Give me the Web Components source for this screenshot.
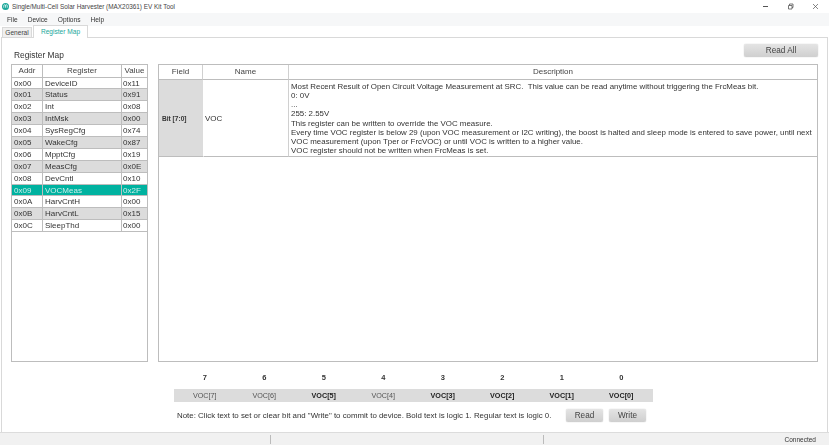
<!DOCTYPE html>
<html><head><meta charset="utf-8">
<style>
html,body{margin:0;padding:0;width:829px;height:445px;overflow:hidden;background:#fff;font-family:"Liberation Sans",sans-serif;color:#333}
</style></head><body>
<ek-app></ek-app>
<script>
function def(name,css,html,init){
  customElements.define(name,class extends HTMLElement{
    connectedCallback(){
      if(this.shadowRoot)return;
      const r=this.attachShadow({mode:'open'});
      r.innerHTML='<style>'+css+'</style>'+html;
      if(init)init(r,this);
    }
  });
}
def('ek-title',`:host{display:flex;align-items:center;height:13px;background:#fff;font-size:6.4px;color:#444}
.i{margin:0 3px 0 2px;width:7px;height:7px;flex:none}
.t{flex:1}
.w{display:flex}
.w svg{width:7px;height:7px;display:block;margin-right:18px}
.w svg:last-child{margin-right:10px}`,
`<svg class="i" viewBox="0 0 8 8"><circle cx="4" cy="4" r="4" fill="#1aa79a"/><path d="M2 5.4V3a1 1 0 0 1 2 0v2.4M4 3a1 1 0 0 1 2 0v2.4" fill="none" stroke="#fff" stroke-width=".8"/></svg>
<span class="t">Single/Multi-Cell Solar Harvester (MAX20361) EV Kit Tool</span>
<span class="w">
<svg viewBox="0 0 7 7"><path d="M1 3.5H6" stroke="#555" fill="none"/></svg>
<svg viewBox="0 0 7 7"><path d="M1.5 2.5H5V6H1.5ZM2.5 2.5V1H6V4.5H5" stroke="#555" stroke-width=".8" fill="none"/></svg>
<svg viewBox="0 0 7 7"><path d="M1 1L6 6M6 1L1 6" stroke="#555" stroke-width=".7" fill="none"/></svg>
</span>`);
def('ek-menu',`:host{display:flex;height:13px;align-items:center;background:#f6f7f8;font-size:6.6px;color:#333;padding-left:7px;gap:10px}`,
`<span>File</span><span>Device</span><span>Options</span><span>Help</span>`);
def('ek-tabs',`:host{display:flex;height:11px;align-items:flex-end;background:#fff;font-size:6.6px;padding-left:2px;position:relative;z-index:1}
span{display:block;box-sizing:border-box}
.g{width:30px;height:10px;text-align:center;background:#f0f0f0;border:1px solid #d9d9d9;border-bottom:none;color:#444;line-height:9px}
.r{width:55px;margin-left:1px;height:13px;line-height:12px;text-align:center;background:#fff;border:1px solid #d9d9d9;border-bottom:none;color:#22a79b;margin-bottom:-1px}`,
`<span class="g">General</span><span class="r">Register Map</span>`);
def('ek-button',`:host{display:inline-flex;align-items:center;justify-content:center;box-sizing:border-box;border-radius:2px;background:linear-gradient(#e4e4e4,#cfcfcf);box-shadow:0 0 1px #aaa;color:#444;font-size:8.2px}`,`<slot></slot>`);
def('ek-regs',`:host{display:block;box-sizing:border-box;border:1px solid #bdbdbd;width:137px;height:298px;background:#fff;font-size:8px;color:#333}
.g{display:grid;grid-template-columns:30px 79px 26px;grid-template-rows:12.5px;grid-auto-rows:11.9px}
.g>*{box-sizing:border-box;padding-left:2px;line-height:11px;border-bottom:1px solid #bdbdbd;white-space:nowrap;overflow:hidden}
.g>:nth-child(3n+2){border-left:1px solid #bdbdbd;padding-left:2px}
.g>:nth-child(3n){border-left:1px solid #bdbdbd;padding-left:1px}
.g>.h{text-align:center;padding-left:0;line-height:12px;color:#444}
.d{background:#dcdcdc}
.s{background:#00b2a0;color:#cdeeea}`,
``,(r)=>{
 const regs=[['0x00','DeviceID','0x11'],['0x01','Status','0x91'],['0x02','Int','0x08'],['0x03','IntMsk','0x00'],['0x04','SysRegCfg','0x74'],['0x05','WakeCfg','0x87'],['0x06','MpptCfg','0x19'],['0x07','MeasCfg','0x0E'],['0x08','DevCntl','0x10'],['0x09','VOCMeas','0x2F'],['0x0A','HarvCntH','0x00'],['0x0B','HarvCntL','0x15'],['0x0C','SleepThd','0x00']];
 let h='<div class="g"><div class="h">Addr</div><div class="h">Register</div><div class="h">Value</div>';
 regs.forEach((x,i)=>{const c=i===9?'s':(i%2?'d':'');x.forEach(v=>h+=`<div class="${c}">${v}</div>`)});
 r.innerHTML+=h+'</div>';
});
def('ek-desc',`:host{display:block;box-sizing:border-box;border:1px solid #bdbdbd;width:660px;height:298px;background:#fff;font-size:8px;color:#333}
.g{display:grid;grid-template-columns:44px 86px 1fr;grid-template-rows:15px 77px}
.g>*{box-sizing:border-box;border-bottom:1px solid #bdbdbd}
.h{text-align:center;line-height:14px;color:#444;border-right:1px solid #d0d0d0}
.h:nth-child(3){border-right:none}
.f{background:#dcdcdc;font-weight:bold;font-size:6.6px;display:flex;align-items:center;padding-left:3px;color:#333}
.n{display:flex;align-items:center;padding-left:1px;border-left:1px solid #fff;border-right:1px solid #d0d0d0}
.t{padding:2px 2px 0;line-height:9.15px;font-size:7.9px;white-space:nowrap}`,
`<div class="g"><div class="h">Field</div><div class="h">Name</div><div class="h">Description</div>
<div class="f">Bit [7:0]</div><div class="n">VOC</div>
<div class="t">Most Recent Result of Open Circuit Voltage Measurement at SRC.&nbsp; This value can be read anytime without triggering the FrcMeas bit.<br>0: 0V<br>...<br>255: 2.55V<br>This register can be written to override the VOC measure.<br>Every time VOC register is below 29 (upon VOC measurement or I2C writing), the boost is halted and sleep mode is entered to save power, until next<br>VOC measurement (upon Tper or FrcVOC) or until VOC is written to a higher value.<br>VOC register should not be written when FrcMeas is set.</div></div>`);
def('ek-bits',`:host{display:block;width:479px;font-size:7.2px;color:#333}
.g{display:grid;grid-template-columns:repeat(8,59.5px);padding:0 2px 0 1px;text-align:center}
.n{font-weight:bold;height:19px;line-height:16px;font-size:7.5px}
.s{background:#dcdcdc;margin:0 -2px 0 -1px;padding:0 2px 0 1px;grid-column:1/-1;display:grid;grid-template-columns:repeat(8,59.5px)}
.v{height:13px;line-height:14px;color:#555}
.v.b{font-weight:bold;color:#222}`,
`<div class="g">${[7,6,5,4,3,2,1,0].map(n=>`<div class="n">${n}</div>`).join('')}
<div class="s">${[0,0,1,0,1,1,1,1].map((b,i)=>`<div class="v ${b?'b':''}">VOC[${7-i}]</div>`).join('')}</div></div>`);
def('ek-status',`:host{display:grid;grid-template-columns:271px 273px 1fr;height:12px;background:#f1f1f1;font-size:6.5px;color:#333;border-top:1px solid #dcdcdc}
div{border-right:1px solid #bbb;margin:2px 0}
div:last-child{border:none;text-align:right;padding-right:13px;line-height:9px}`,
`<div></div><div></div><div>Connected</div>`);
def('ek-app',`:host{display:flex;flex-direction:column;width:829px;height:445px;font-family:"Liberation Sans",sans-serif;filter:blur(.3px)}
.pane{flex:1;box-sizing:border-box;border:1px solid #d9d9d9;border-bottom:none;margin:0 1px;padding:6px 9px 0 9px;display:flex;flex-direction:column;min-height:0}
.top{display:flex;justify-content:space-between;height:20px}
h1{font:normal 8.4px "Liberation Sans",sans-serif;margin:0 0 0 3px;padding-top:6px;color:#333}
.ra{width:74px;height:13px;margin-right:0}
.tables{display:flex;gap:10px}
.foot{margin-left:163px;margin-top:8px}
.note{display:flex;align-items:center;font-size:7.88px;color:#333;height:26px;padding-left:3px}
.note span{width:389px;white-space:nowrap}
.note ek-button{width:37px;height:13px;margin-right:6px}`,
`<ek-title></ek-title><ek-menu></ek-menu><ek-tabs></ek-tabs>
<div class="pane">
<div class="top"><h1>Register Map</h1><ek-button class="ra">Read All</ek-button></div>
<div class="tables"><ek-regs></ek-regs><ek-desc></ek-desc></div>
<div class="foot"><ek-bits></ek-bits>
<div class="note"><span>Note: Click text to set or clear bit and "Write" to commit to device. Bold text is logic 1. Regular text is logic 0.</span><ek-button>Read</ek-button><ek-button>Write</ek-button></div></div>
</div>
<ek-status></ek-status>`);
</script>
</body></html>
